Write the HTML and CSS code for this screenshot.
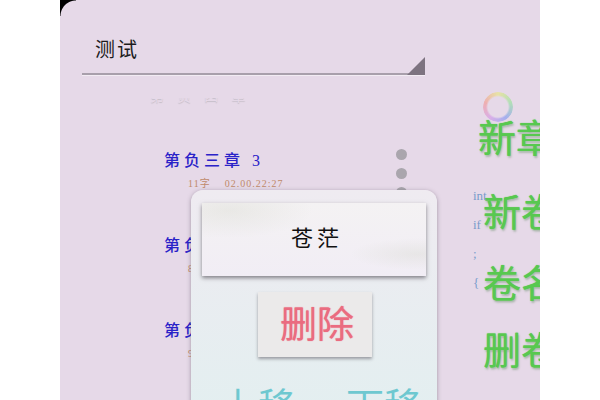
FILE: index.html
```html
<!DOCTYPE html>
<html>
  <head>
    <title>章节管理</title>
    <link rel="stylesheet" href="styles.css">
  </head>
  <body>
    <div class="screen">
      <div class="corner"></div>

      <div class="left-panel">
        <div class="title-row">
          <span class="book-title">测试</span>
          <span class="title-arrow"></span>
        </div>
        <div class="faded-row">第 负 四 章</div>
        <div class="chapter-area">
          <div class="chapter-list">
            <div class="chapter">
              <div class="chapter-name">第负三章 3</div>
              <div class="chapter-meta">11字 &nbsp; &nbsp;02.00.22:27</div>
            </div>
            <div class="chapter">
              <div class="chapter-name">第负二章 2</div>
              <div class="chapter-meta">8字 &nbsp; &nbsp;02.00.22:27</div>
            </div>
            <div class="chapter">
              <div class="chapter-name">第负一章 1</div>
              <div class="chapter-meta">9字 &nbsp; &nbsp;02.00.22:27</div>
            </div>
          </div>
          <div class="dots">
            <span class="dot"></span>
            <span class="dot"></span>
            <span class="dot"></span>
          </div>
        </div>
      </div>

      <div class="right-panel">
        <div class="ring"></div>
        <div class="side-btn side-first">新章节</div>
        <div class="code-lines">
          <span>int</span>
          <span>if</span>
          <span>;</span>
          <span>{</span>
        </div>
        <div class="side-btn side-second">新卷名</div>
        <div class="side-btn">卷名称</div>
        <div class="side-btn side-last">删卷名</div>
      </div>

      <div class="dialog">
        <div class="dialog-title">苍茫</div>
        <div class="delete-btn">删除</div>
        <div class="move-row">
          <span>上移</span>
          <span>下移</span>
        </div>
      </div>
    </div>
  </body>
</html>
```

FILE: styles.css
```css
:root {
  --screen-bg: #e6d9e8;
  --chapter-blue: #2a22c8;
  --green: #58c850;
  --cjk: "Noto Sans CJK SC", "Noto Sans", sans-serif;
  --cjk-serif: "Liberation Serif", "Noto Sans CJK SC", serif;
}

body {
  margin: 0;
  height: 400px;
  overflow: hidden;
  background-color: #fff;
  display: flex;
  justify-content: center;
  font-family: var(--cjk);
}

.screen {
  width: 480px;
  height: 400px;
  position: relative;
  overflow: hidden;
  display: flex;
  background-color: var(--screen-bg);
}

.corner {
  position: absolute;
  left: 0;
  top: 0;
  width: 16px;
  height: 16px;
  background: radial-gradient(circle at 100% 100%, transparent 15px, #000 16px);
}

.left-panel {
  width: 413px;
  flex-shrink: 0;
  padding-left: 22px;
  box-sizing: border-box;
}

.title-row {
  width: 343px;
  height: 75px;
  box-sizing: border-box;
  padding: 36px 0 0 13px;
  border-bottom: 2px solid #a89fab;
  position: relative;
  box-shadow: 0 1px 0 #f2ecf3;
}

.book-title {
  display: block;
  font-size: 20px;
  line-height: 26px;
  letter-spacing: 2px;
  color: #1c1c1c;
}

.title-arrow {
  position: absolute;
  right: 0;
  bottom: -2px;
  width: 0;
  height: 0;
  border-left: 18px solid transparent;
  border-bottom: 18px solid #7d7380;
}

.faded-row {
  height: 52px;
  line-height: 40px;
  padding-left: 68px;
  font-size: 14px;
  letter-spacing: 5px;
  color: #e6d9e8;
  text-shadow: 0 1px 1px #c4bcc6;
  overflow: hidden;
  clip-path: inset(23px 0 0 0);
}

.chapter-area {
  display: flex;
  width: 343px;
}

.chapter-list {
  flex: 1;
  padding-left: 82px;
  padding-top: 22px;
}

.chapter {
  height: 85px;
}

.chapter-name {
  font-size: 16px;
  line-height: 24px;
  letter-spacing: 4px;
  font-weight: 500;
  color: var(--chapter-blue);
  font-family: var(--cjk-serif);
}

.chapter-meta {
  margin-top: 4px;
  padding-left: 24px;
  font-size: 10px;
  line-height: 14px;
  letter-spacing: 1px;
  color: #c08a6a;
  font-family: var(--cjk-serif);
}

.dots {
  display: flex;
  flex-direction: column;
  gap: 8px;
  padding-top: 22px;
  margin-right: 18px;
}

.dot {
  width: 11px;
  height: 11px;
  border-radius: 50%;
  background-color: #aaa6ad;
}

.right-panel {
  flex: 1;
  min-width: 0;
  position: relative;
  padding-top: 92px;
  white-space: nowrap;
}

.ring {
  width: 30px;
  height: 30px;
  margin-left: 10px;
  border-radius: 50%;
  background: conic-gradient(#e8e49a, #a8e0b0, #9aa8f0, #d8a8e8, #f0a8a8, #e8e49a);
  -webkit-mask: radial-gradient(circle, transparent 10px, #000 12px);
  mask: radial-gradient(circle, transparent 10px, #000 12px);
  opacity: 0.85;
}

.side-btn {
  font-size: 38px;
  line-height: 50px;
  color: var(--green);
  text-shadow: 0 0 1px var(--green), 1px 2px 2px rgba(70, 120, 70, 0.35);
  padding-left: 10px;
}

.side-first {
  margin-top: -11px;
  padding-left: 5px;
}

.side-second {
  margin-top: 24px;
}

.side-btn + .side-btn {
  margin-top: 21px;
}

.side-btn + .side-last {
  margin-top: 17px;
}

.code-lines {
  position: absolute;
  left: 0;
  top: 188px;
  display: flex;
  flex-direction: column;
  gap: 14px;
  font-family: "Liberation Serif", serif;
  font-size: 13px;
  line-height: 15px;
  color: #7a9ccb;
}

.dialog {
  position: absolute;
  left: 131px;
  top: 190px;
  width: 246px;
  height: 240px;
  box-sizing: border-box;
  padding: 13px 11px 0;
  border-radius: 12px;
  background: linear-gradient(#efebf1, #e2eff0);
  box-shadow: 0 1px 4px rgba(90, 80, 95, 0.5);
  display: flex;
  flex-direction: column;
  align-items: center;
}

.dialog-title {
  width: 100%;
  height: 73px;
  box-sizing: border-box;
  padding-left: 6px;
  line-height: 66px;
  text-align: center;
  font-size: 22px;
  letter-spacing: 4px;
  color: #111;
  background:
    radial-gradient(ellipse at 12% 10%, rgba(190, 195, 175, 0.2), transparent 30%),
    radial-gradient(ellipse at 96% 70%, rgba(190, 195, 175, 0.2), transparent 22%),
    linear-gradient(#f4f2f3, #f1edf5);
  box-shadow: 0 2px 4px rgba(60, 55, 65, 0.6);
}

.delete-btn {
  margin: 16px 0 0 2px;
  width: 114px;
  height: 65px;
  box-sizing: border-box;
  padding-left: 4px;
  line-height: 60px;
  text-align: center;
  font-size: 37px;
  color: #ea6c80;
  text-shadow: 0 0 1px #ea6c80;
  background-color: #ebeaea;
  box-shadow: 0 2px 3px rgba(60, 55, 65, 0.45);
}

.move-row {
  margin-top: 22px;
  width: 100%;
  display: flex;
  justify-content: space-between;
  padding: 0 4px 0 18px;
  box-sizing: border-box;
  font-size: 38px;
  line-height: 50px;
  color: #6ec8d0;
}
```
